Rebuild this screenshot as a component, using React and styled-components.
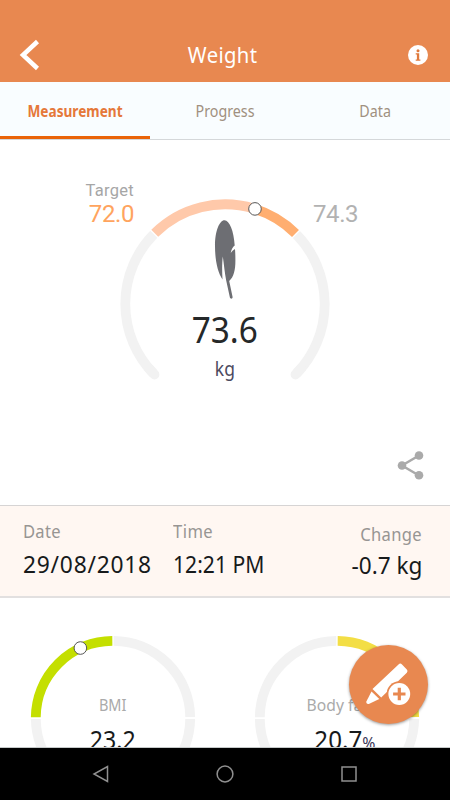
import styled, { createGlobalStyle } from 'styled-components';

const GlobalStyle = createGlobalStyle`
  * {
    box-sizing: border-box;
  }
  body {
    margin: 0;
    background: #fff;
    font-family: 'Noto Sans', sans-serif;
  }
  svg {
    display: block;
  }
`;

const Screen = styled.div`
  position: relative;
  display: flex;
  flex-direction: column;
  width: 450px;
  height: 800px;
  overflow: hidden;
  background: #fff;
`;

const Header = styled.header`
  display: grid;
  grid-template-columns: 60px 1fr 60px;
  align-items: center;
  height: 82px;
  flex: none;
  padding-top: 28px;
  background: #e88850;
  color: #fff;
`;

const Title = styled.h1`
  margin: 0 4px 0 0;
  text-align: center;
  font-size: 22.5px;
  font-weight: 400;
  line-height: 54px;
`;

const IconButton = styled.button`
  display: flex;
  padding: 0;
  border: 0;
  background: none;
  justify-self: ${({ $end }) => ($end ? 'end' : 'start')};
  margin: ${({ $end }) => ($end ? '0 22px 0 0' : '0 0 0 18px')};
`;

const Tabs = styled.nav`
  display: grid;
  grid-template-columns: repeat(3, 150px);
  height: 58px;
  flex: none;
  background: #f9fdff;
  border-bottom: 1px solid #d5d8da;
`;

const Tab = styled.button`
  padding: 4px 0 0;
  border: 0;
  border-bottom: 3px solid ${({ $active }) => ($active ? '#ea6409' : 'transparent')};
  background: none;
  color: ${({ $active }) => ($active ? '#e5783a' : '#a09080')};
  font-family: inherit;
  font-size: 15.5px;
  font-weight: ${({ $active }) => ($active ? 700 : 400)};
`;

// condenses the text without changing its height
const Squeeze = styled.span`
  display: inline-block;
  white-space: nowrap;
  transform: scaleX(${({ $x }) => $x});
  transform-origin: ${({ $origin }) => $origin || 'center'};
  letter-spacing: ${({ $gap }) => $gap || 0}px;
`;

const Main = styled.section`
  position: relative;
  height: 365px;
  flex: none;
`;

const DialBox = styled.div`
  width: ${({ $w }) => $w}px;
  height: ${({ $h }) => $h}px;
  margin: 0 auto;
`;

const Bound = styled.div`
  position: absolute;
  top: ${({ $top }) => $top}px;
  ${({ $right }) => ($right ? 'left: 313px;' : 'right: 316px;')}
  text-align: right;
  font-family: Roboto, sans-serif;
  font-size: 24px;
  line-height: 27px;
  letter-spacing: -0.4px;
  color: ${({ $color }) => $color};

  small {
    display: block;
    font-size: 16.5px;
    line-height: 20px;
    letter-spacing: 0.3px;
    color: #a6a6a6;
  }
`;

const Reading = styled.div`
  position: absolute;
  left: ${({ $shift }) => $shift || 0}px;
  right: ${({ $shift }) => -($shift || 0)}px;
  top: ${({ $top }) => $top}px;
  text-align: center;
  font-size: ${({ $size }) => $size}px;
  line-height: 1;
  color: ${({ $color }) => $color};
`;

const Share = styled.button`
  position: absolute;
  right: 26px;
  bottom: 25px;
  padding: 0;
  border: 0;
  background: none;
`;

const Summary = styled.section`
  display: grid;
  grid-template-columns: 150px 1fr 1fr;
  height: 93px;
  flex: none;
  padding: 14px 28px 0 23px;
  background: #fff7f2;
  border-top: 1px solid #d6d4d4;
  border-bottom: 2px solid #e2e0e0;
`;

const Cell = styled.div`
  text-align: ${({ $end }) => ($end ? 'right' : 'left')};
  padding-top: ${({ $end }) => ($end ? 3 : 0)}px;
`;

const Label = styled.div`
  font-size: 18px;
  line-height: 22px;
  color: #979593;
`;

const Value = styled.div`
  margin-top: ${({ $tight }) => ($tight ? 4 : 6)}px;
  font-size: 24px;
  line-height: 32px;
  color: #171a1b;
`;

const Cards = styled.section`
  display: grid;
  grid-template-columns: 225px 225px;
  height: 150px;
  flex: none;
  overflow: hidden;
  border-bottom: 1px solid #c5c9c9;
`;

const Card = styled.div`
  position: relative;
`;

const Unit = styled.span`
  font-size: 17px;
  color: #3c3a5a;
`;

const Fab = styled.button`
  position: absolute;
  left: 349px;
  top: 645px;
  width: 79px;
  height: 79px;
  padding: 0;
  border: 0;
  border-radius: 50%;
  background: #e88850;
  box-shadow: 0 1px 3px rgba(0, 0, 0, 0.4);
`;

const NavBar = styled.footer`
  display: flex;
  align-items: center;
  justify-content: center;
  gap: 106px;
  flex: 1;
  background: #000;
`;

// angles are clockwise degrees from the top
const point = (c, r, deg) => {
  const a = (deg * Math.PI) / 180;
  return [c + r * Math.sin(a), c - r * Math.cos(a)];
};

const Arc = ({ c, r, from, to, color, round }) => {
  const [x1, y1] = point(c, r, from);
  const [x2, y2] = point(c, r, to);
  return (
    <path
      d={`M${x1} ${y1}A${r} ${r} 0 0 1 ${x2} ${y2}`}
      fill="none"
      stroke={color}
      strokeWidth="9.800"
      strokeLinecap={round ? 'round' : 'butt'}
    />
  );
};

const Knob = ({ c, r, at }) => {
  const [x, y] = point(c, r, at);
  return <circle cx={x} cy={y} r="6.300" fill="#fff" stroke="#555" strokeWidth="1" />;
};

const WeightDial = () => (
  <svg width="210" height="210">
    <Arc c={105} r={99.7} from={-135} to={-130} color="#f2f2f2" round />
    <Arc c={105} r={99.7} from={-134} to={-45.6} color="#f2f2f2" />
    <Arc c={105} r={99.7} from={-44.8} to={17} color="#ffc9aa" />
    <Arc c={105} r={99.7} from={17} to={45} color="#ffae70" />
    <Arc c={105} r={99.7} from={45.8} to={134} color="#f2f2f2" />
    <Arc c={105} r={99.7} from={130} to={135} color="#f2f2f2" round />
    <Knob c={105} r={99.7} at={17.5} />
  </svg>
);

const Feather = () => (
  <svg width="24" height="80" viewBox="0 0 24 80">
    <path
      fill="#6d6e73"
      d="M11.500 .3C6.500 .3 2 11 2 26c0 14 2.500 26 7.500 33.500C9 51 9 43 9.800 36.500c1.200 8 1.800 16 3.400 24l3.700 17c.5 1.800 3 1.400 2.700-.5L16.200 61c4.600-4 6.200-11 6.200-20.500 0-4-.1-8-.4-11.500-1.300.8-3 2-4.300 4 .7-3.500 2-6 4-7.500C20.800 11 16.500 .3 11.500 .3z"
    />
  </svg>
);

const SmallDial = ({ first, second, knob }) => (
  <svg width="166" height="166">
    <Arc c={83} r={77.2} from={-89.5} to={-0.5} color={first} />
    <Arc c={83} r={77.2} from={0.5} to={89.3} color={second} />
    <Arc c={83} r={77.2} from={90.7} to={179.5} color="#f2f2f2" />
    <Arc c={83} r={77.2} from={180.5} to={269.3} color="#f2f2f2" />
    {knob && <Knob c={83} r={77.2} at={knob} />}
  </svg>
);

const App = () => (
  <>
    <GlobalStyle />
    <Screen>
      <Header>
        <IconButton aria-label="Back">
          <svg width="22" height="32" viewBox="0 0 22 32">
            <path d="M19.500 2.500L5 16l14.500 13.500" fill="none" stroke="#fff" strokeWidth="4.500" />
          </svg>
        </IconButton>
        <Title>
          <Squeeze $x={0.9} $gap={0.4}>Weight</Squeeze>
        </Title>
        <IconButton $end aria-label="Info">
          <svg width="20" height="20" viewBox="0 0 20 20">
            <circle cx="10" cy="10" r="10" fill="#fff" />
            <path
              d="M7.700 8.200h3.500v6.200h1.200v1.300H7.700v-1.300h1.200V9.500H7.700z"
              fill="#e07a3c"
            />
            <circle cx="10" cy="5.700" r="1.500" fill="#e07a3c" />
          </svg>
        </IconButton>
      </Header>

      <Tabs>
        <Tab $active>
          <Squeeze $x={0.88}>Measurement</Squeeze>
        </Tab>
        <Tab>
          <Squeeze $x={0.92}>Progress</Squeeze>
        </Tab>
        <Tab>
          <Squeeze $x={0.92}>Data</Squeeze>
        </Tab>
      </Tabs>

      <Main>
        <Bound $top={41} $color="#ffa45e">
          <small>Target</small>
          72.0
        </Bound>
        <Bound $top={61} $right $color="#b2b2b2">
          74.3
        </Bound>
        <Reading $top={59} $size={0}>
          <DialBox $w={210} $h={210}>
            <WeightDial />
          </DialBox>
        </Reading>
        <Reading $top={80} $size={0}>
          <DialBox $w={24} $h={80}>
            <Feather />
          </DialBox>
        </Reading>
        <Reading $top={170} $size={37} $color="#252829">
          <Squeeze $x={0.9}>73.6</Squeeze>
        </Reading>
        <Reading $top={220} $size={19} $color="#4b4a60">
          <Squeeze $x={0.92}>kg</Squeeze>
        </Reading>
        <Share aria-label="Share">
          <svg width="27" height="29" viewBox="0 0 27 29">
            <path d="M22 4.500L5 14.500l17 10" fill="none" stroke="#aaa" strokeWidth="2.500" />
            <g fill="#aaa">
              <circle cx="22" cy="4.500" r="4.300" />
              <circle cx="5" cy="14.500" r="4.300" />
              <circle cx="22" cy="24.200" r="4.300" />
            </g>
          </svg>
        </Share>
      </Main>

      <Summary>
        <Cell>
          <Label>
            <Squeeze $x={0.92} $gap={0.3} $origin="left">Date</Squeeze>
          </Label>
          <Value>
            <Squeeze $x={0.95} $gap={0.8} $origin="left">29/08/2018</Squeeze>
          </Value>
        </Cell>
        <Cell>
          <Label>
            <Squeeze $x={0.92} $gap={0.5} $origin="left">Time</Squeeze>
          </Label>
          <Value>
            <Squeeze $x={0.88} $origin="left">12:21 PM</Squeeze>
          </Value>
        </Cell>
        <Cell $end>
          <Label>
            <Squeeze $x={0.92} $gap={0.3} $origin="right">Change</Squeeze>
          </Label>
          <Value $tight>
            <Squeeze $x={0.94} $origin="right">-0.7 kg</Squeeze>
          </Value>
        </Cell>
      </Summary>

      <Cards>
        <Card>
          <Reading $top={37} $size={0}>
            <DialBox $w={166} $h={166}>
              <SmallDial first="#c4df00" second="#f2f2f2" knob={-25} />
            </DialBox>
          </Reading>
          <Reading $top={99} $size={16.5} $color="#aaa">
            <Squeeze $x={0.88}>BMI</Squeeze>
          </Reading>
          <Reading $top={128} $size={26} $color="#171a1b">
            <Squeeze $x={0.89}>23.2</Squeeze>
          </Reading>
        </Card>
        <Card>
          <Reading $top={37} $size={0} $shift={-0.7}>
            <DialBox $w={166} $h={166}>
              <SmallDial first="#f2f2f2" second="#f3de45" />
            </DialBox>
          </Reading>
          <Reading $top={99} $size={16.5} $color="#aaa" $shift={-0.7}>
            <Squeeze $x={0.95}>Body fat</Squeeze>
          </Reading>
          <Reading $top={128} $size={26} $color="#171a1b" $shift={7}>
            <Squeeze $x={0.93}>
              20.7<Unit>%</Unit>
            </Squeeze>
          </Reading>
        </Card>
      </Cards>

      <Fab aria-label="Add measurement">
        <svg width="79" height="79" viewBox="0 0 79 79">
          <g fill="#fff">
            <path d="M49.500 19.500q1.800-1.800 3.500 0l4.800 5q1.500 1.600 0 3.200L32.200 52.500l-8.700-8.500z" />
            <path d="M22.500 46.500l7.800 7.500-10 4.800c-2 .7-3.500-.5-2.800-2.600z" />
          </g>
          <circle cx="50.300" cy="49" r="12.700" fill="#e88850" />
          <circle cx="50.300" cy="49" r="10.900" fill="#fff" />
          <path d="M50.300 42.800v12.400M44.100 49h12.400" stroke="#e88850" strokeWidth="3.200" />
        </svg>
      </Fab>

      <NavBar>
        <svg width="18" height="18" viewBox="0 0 18 18">
          <path d="M15.500 1.500v15L2 9z" fill="none" stroke="#909090" strokeWidth="1.500" />
        </svg>
        <svg width="18" height="18" viewBox="0 0 18 18">
          <circle cx="9" cy="9" r="7.900" fill="none" stroke="#909090" strokeWidth="1.500" />
        </svg>
        <svg width="18" height="18" viewBox="0 0 18 18">
          <rect x="2" y="2" width="14" height="14" fill="none" stroke="#909090" strokeWidth="1.500" />
        </svg>
      </NavBar>
    </Screen>
  </>
);

export default App;
